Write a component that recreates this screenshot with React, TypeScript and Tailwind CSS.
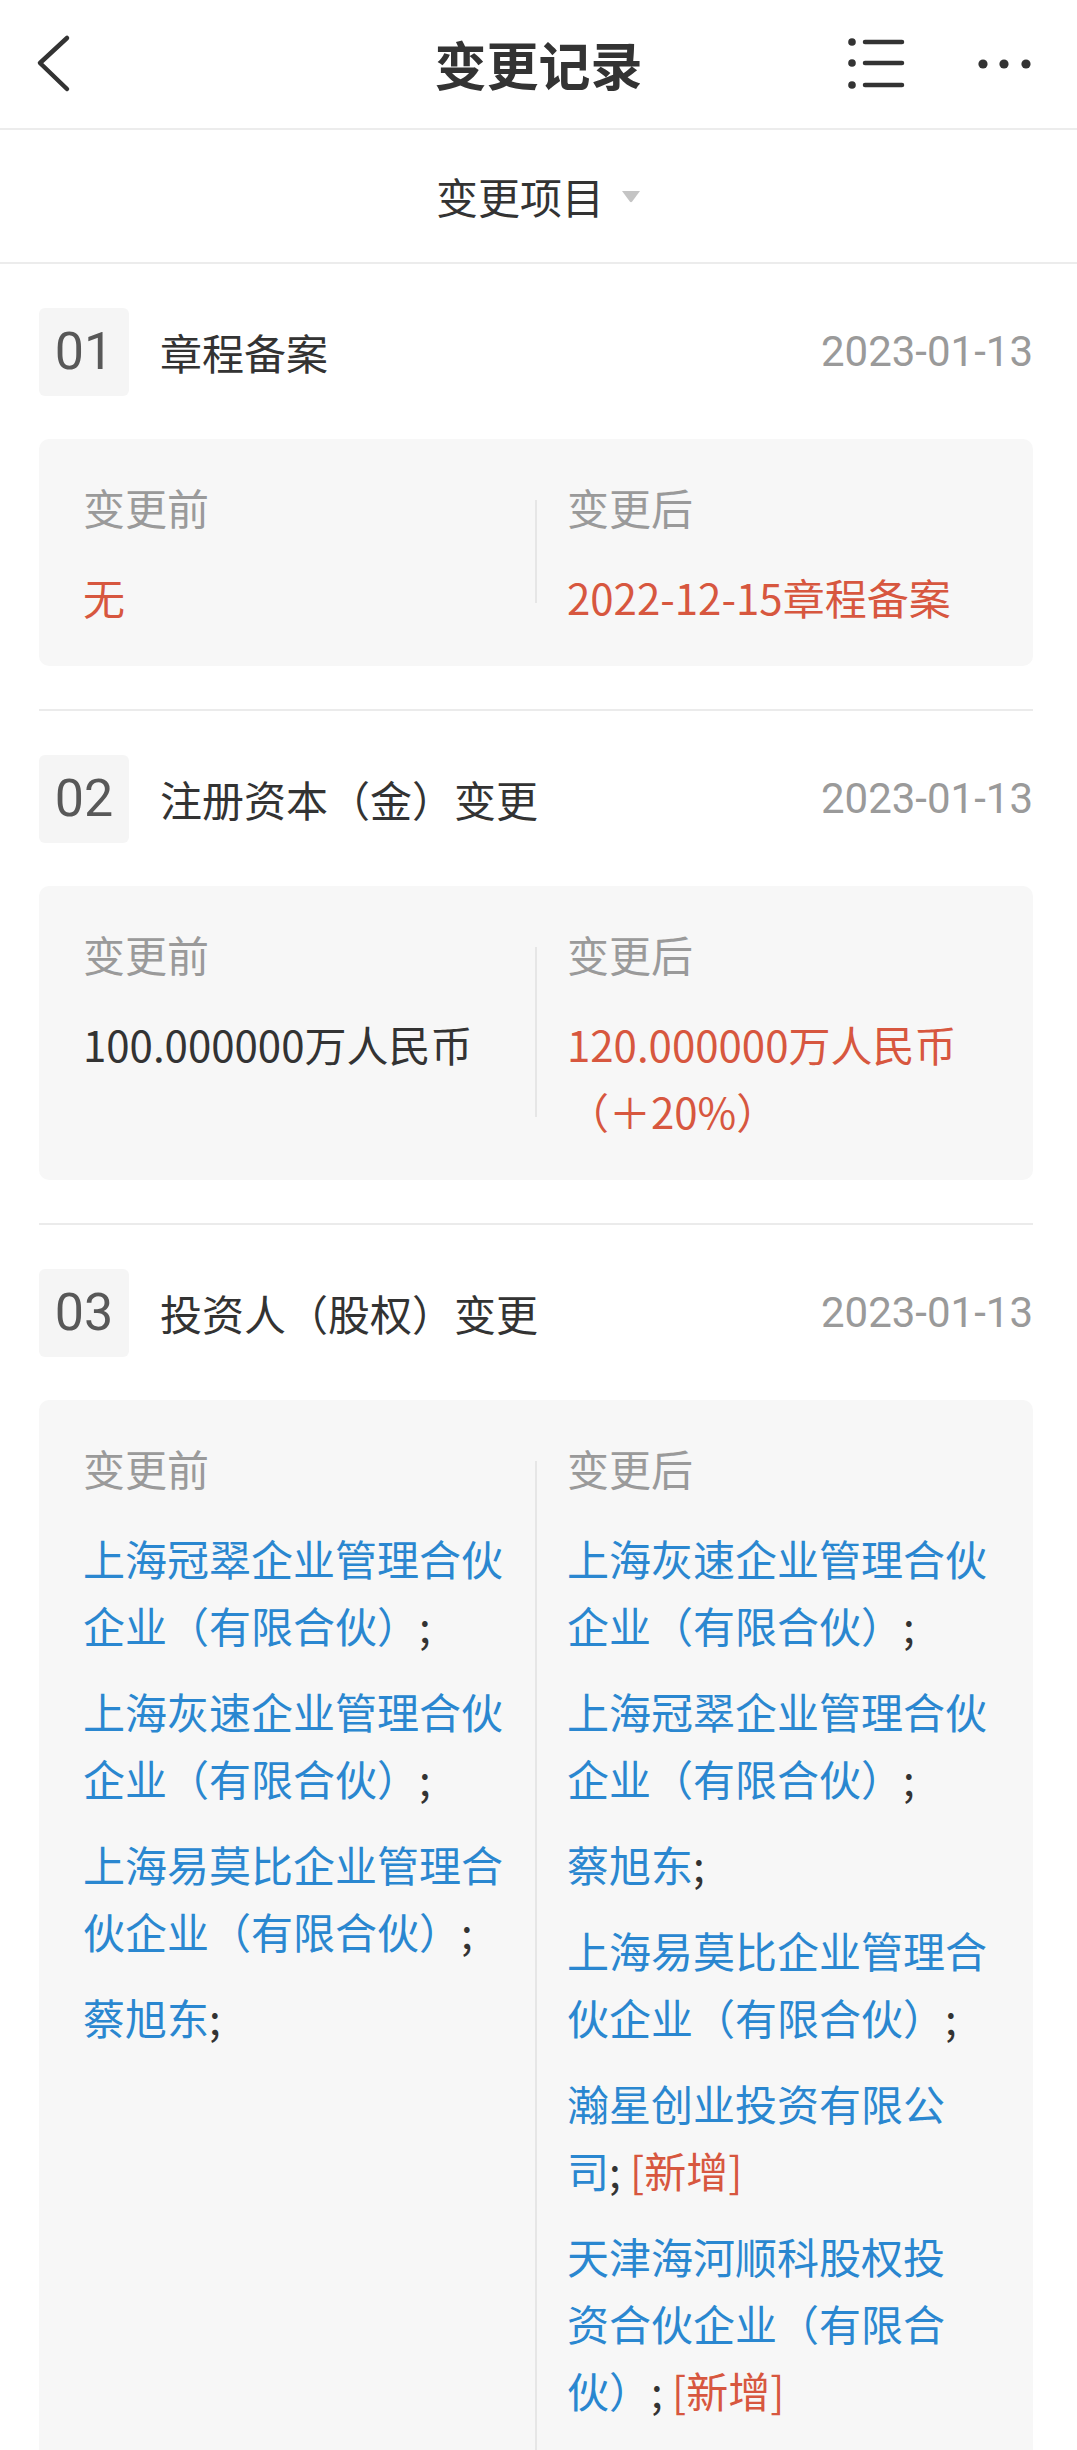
import React from 'react';

type Item = { lines: string[]; added?: boolean };

const leftItems: Item[] = [
    { lines: ['上海冠翠企业管理合伙', '企业（有限合伙）'] },
    { lines: ['上海灰速企业管理合伙', '企业（有限合伙）'] },
    { lines: ['上海易莫比企业管理合', '伙企业（有限合伙）'] },
    { lines: ['蔡旭东'] },
];

const rightItems: Item[] = [
    { lines: ['上海灰速企业管理合伙', '企业（有限合伙）'] },
    { lines: ['上海冠翠企业管理合伙', '企业（有限合伙）'] },
    { lines: ['蔡旭东'] },
    { lines: ['上海易莫比企业管理合', '伙企业（有限合伙）'] },
    { lines: ['瀚星创业投资有限公', '司'], added: true },
    { lines: ['天津海河顺科股权投', '资合伙企业（有限合', '伙）'], added: true },
];

function InvestorList({ items }: { items: Item[] }) {
    return (
        <div className="flex flex-col gap-[19px]">
            {items.map((item, i) => (
                <div key={i} className="text-[#2a87d0]">
                    {item.lines.map((line, j) => (
                        <div key={j} className="whitespace-nowrap leading-[67px]">
                            {line}
                            {j === item.lines.length - 1 && (
                                <>
                                    <span className="text-[#333]">;</span>
                                    {item.added && <span className="text-[#d7573f]"> [新增]</span>}
                                </>
                            )}
                        </div>
                    ))}
                </div>
            ))}
        </div>
    );
}

function ChangeCard({ before, after, tall }: { before: React.ReactNode; after: React.ReactNode; tall?: boolean }) {
    return (
        <div className="mt-[43px] grid grid-cols-[1fr_2px_1fr] rounded-[10px] bg-[#f7f7f7]">
            <div className={`min-w-0 pl-[44px] pt-[40px] ${tall ? 'pb-[90px]' : 'pb-[36px]'}`}>
                <div className="text-[42px] leading-[56px] text-[#9a9a9a]">变更前</div>
                <div className="mt-[28px] text-[42px] leading-[67px]">{before}</div>
            </div>
            <div className="mt-[61px] mb-[63px] bg-[#e6e6e6]" />
            <div className={`min-w-0 pl-[30px] pt-[40px] ${tall ? 'pb-[90px]' : 'pb-[36px]'}`}>
                <div className="text-[42px] leading-[56px] text-[#9a9a9a]">变更后</div>
                <div className="mt-[28px] text-[42px] leading-[67px]">{after}</div>
            </div>
        </div>
    );
}

function Section({ no, title, date, last, children }: { no: string; title: string; date: string; last?: boolean; children: React.ReactNode }) {
    return (
        <div className="pl-[39px] pr-[44px]">
            <div className={`pt-[44px] pb-[43px] ${last ? '' : 'border-b-2 border-[#ebebeb]'}`}>
                <div className="flex h-[88px] items-center">
                    <div className="flex h-[88px] w-[90px] items-center justify-center rounded-[6px] bg-[#f5f5f5] font-['Roboto',sans-serif] text-[52px] leading-none text-[#585858]">
                        {no}
                    </div>
                    <div className="ml-[31px] text-[42px] leading-none text-[#333]">{title}</div>
                    <div className="ml-auto font-['Roboto',sans-serif] text-[42px] leading-none text-[#9a9a9a]">{date}</div>
                </div>
                {children}
            </div>
        </div>
    );
}

export default function App() {
    return (
        <div className="w-full bg-white font-['Noto_Sans_CJK_SC','Noto_Sans',sans-serif]">
            {/* top bar */}
            <div className="grid h-[130px] grid-cols-[1fr_auto_1fr] items-center border-b-2 border-[#ececec]">
                <div className="flex pl-[30px]">
                    <svg width="44" height="62" viewBox="0 0 44 62" fill="none">
                        <path d="M37 5 L10 30 L37 56" stroke="#333" strokeWidth="4.5" strokeLinecap="round" strokeLinejoin="round" />
                    </svg>
                </div>
                <div className="text-[52px] font-bold leading-none text-[#333]">变更记录</div>
                <div className="flex items-center justify-end gap-[69px] pr-[42px]">
                    <svg width="60" height="60" viewBox="0 0 60 60" fill="none">
                        <circle cx="6" cy="8" r="3.8" fill="#333" />
                        <circle cx="6" cy="29" r="3.8" fill="#333" />
                        <circle cx="6" cy="51" r="3.8" fill="#333" />
                        <path d="M19 8 H56 M19 29 H56 M19 51 H56" stroke="#333" strokeWidth="4.5" strokeLinecap="round" />
                    </svg>
                    <svg width="60" height="20" viewBox="0 0 60 20">
                        <circle cx="8" cy="10" r="4.6" fill="#333" />
                        <circle cx="29" cy="10" r="4.6" fill="#333" />
                        <circle cx="51" cy="10" r="4.6" fill="#333" />
                    </svg>
                </div>
            </div>

            {/* filter bar */}
            <div className="flex h-[134px] items-center justify-center gap-[17px] border-b-2 border-[#ececec]">
                <span className="text-[42px] leading-none text-[#333]">变更项目</span>
                <svg width="20" height="13" viewBox="0 0 20 13">
                    <path d="M1 1 H19 L11.2 11.6 Q10 13 8.8 11.6 Z" fill="#c4c4c4" />
                </svg>
            </div>

            <Section no="01" title="章程备案" date="2023-01-13">
                <ChangeCard
                    before={<span className="text-[#d7573f]">无</span>}
                    after={<span className="text-[#d7573f]">2022-12-15章程备案</span>}
                />
            </Section>

            <Section no="02" title="注册资本（金）变更" date="2023-01-13">
                <ChangeCard
                    before={<span className="text-[#333]">100.000000万人民币</span>}
                    after={
                        <div className="text-[#d7573f]">
                            <div>120.000000万人民币</div>
                            <div>（＋20%）</div>
                        </div>
                    }
                />
            </Section>

            <Section no="03" title="投资人（股权）变更" date="2023-01-13" last>
                <ChangeCard tall before={<InvestorList items={leftItems} />} after={<InvestorList items={rightItems} />} />
            </Section>
        </div>
    );
}
